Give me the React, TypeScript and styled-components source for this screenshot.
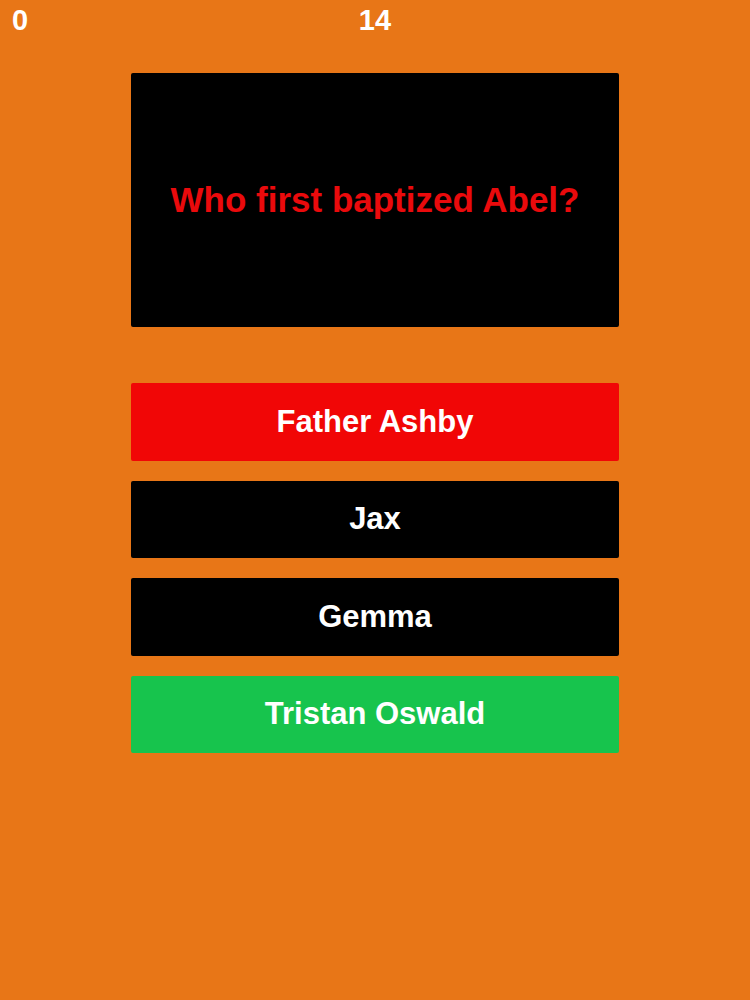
import React from 'react';
import styled, { createGlobalStyle } from 'styled-components';

type AnswerState = 'wrong' | 'idle' | 'right';

interface Answer {
  label: string;
  state: AnswerState;
}

const GlobalStyle = createGlobalStyle`
  html, body {
    margin: 0;
    padding: 0;
    background: #e87617;
  }
  body {
    font-family: "Liberation Sans", Arial, Helvetica, sans-serif;
    -webkit-font-smoothing: antialiased;
  }
`;

const Screen = styled.div`
  width: 750px;
  min-height: 1000px;
  background: #e87617;
  display: flex;
  flex-direction: column;
`;

const ScoreBar = styled.div`
  height: 40px;
  display: grid;
  grid-template-columns: 1fr auto 1fr;
  align-items: center;
  padding: 0 12px;
  color: #ffffff;
  font-weight: bold;
  font-size: 29px;
`;

const Score = styled.div`
  justify-self: start;
`;

const Counter = styled.div`
  justify-self: center;
`;

const Board = styled.div`
  width: 488px;
  margin: 33px 0 0 131px;
  display: flex;
  flex-direction: column;
`;

const QuestionCard = styled.div`
  height: 254px;
  background: #000000;
  border-radius: 2px;
  display: flex;
  align-items: center;
  justify-content: center;
  padding: 0 20px;
  box-sizing: border-box;
`;

const QuestionText = styled.div`
  color: #ea0a0c;
  font-weight: bold;
  font-size: 35px;
  text-align: center;
`;

const AnswerList = styled.div`
  margin-top: 56px;
  display: flex;
  flex-direction: column;
  gap: 20px;
`;

const answerColours: Record<AnswerState, string> = {
  wrong: '#f10606',
  idle: '#000000',
  right: '#17c44d',
};

const AnswerButton = styled.div<{ $state: AnswerState }>`
  height: 77.5px;
  background: ${(p) => answerColours[p.$state]};
  border-radius: 2px;
  display: flex;
  align-items: center;
  justify-content: center;
  color: #ffffff;
  font-weight: bold;
  font-size: 31px;
`;

const answers: Answer[] = [
  { label: 'Father Ashby', state: 'wrong' },
  { label: 'Jax', state: 'idle' },
  { label: 'Gemma', state: 'idle' },
  { label: 'Tristan Oswald', state: 'right' },
];

export default function App() {
  return (
    <>
      <GlobalStyle />
      <Screen>
        <ScoreBar>
          <Score>0</Score>
          <Counter>14</Counter>
          <span />
        </ScoreBar>
        <Board>
          <QuestionCard>
            <QuestionText>Who first baptized Abel?</QuestionText>
          </QuestionCard>
          <AnswerList>
            {answers.map((a) => (
              <AnswerButton key={a.label} $state={a.state}>
                {a.label}
              </AnswerButton>
            ))}
          </AnswerList>
        </Board>
      </Screen>
    </>
  );
}
